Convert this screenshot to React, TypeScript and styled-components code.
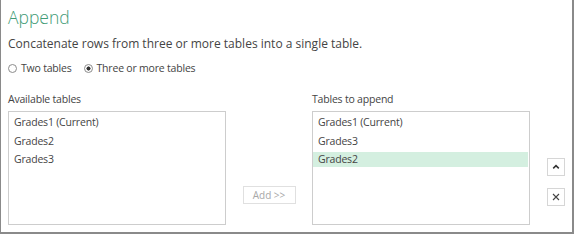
import styled, { createGlobalStyle } from "styled-components";

const GlobalStyle = createGlobalStyle`
  html, body {
    margin: 0;
    padding: 0;
    background: #ffffff;
  }
  body {
    font-family: "Segoe UI", "Open Sans", "Noto Sans", sans-serif;
    color: #444444;
  }
`;

interface ListItem {
  label: string;
  selected?: boolean;
}

const available: ListItem[] = [
  { label: "Grades1 (Current)" },
  { label: "Grades2" },
  { label: "Grades3" },
];

const toAppend: ListItem[] = [
  { label: "Grades1 (Current)" },
  { label: "Grades3" },
  { label: "Grades2", selected: true },
];

export default function App() {
  return (
    <>
      <GlobalStyle />
      <Dialog>
        <Title>Append</Title>
        <Description>Concatenate rows from three or more tables into a single table.</Description>
        <RadioRow>
          <RadioOption>
            <RadioCircle />
            Two tables
          </RadioOption>
          <RadioOption>
            <RadioCircle $checked />
            Three or more tables
          </RadioOption>
        </RadioRow>
        <Body>
          <Column>
            <Label>Available tables</Label>
            <ListBox>
              {available.map((item) => (
                <Row key={item.label} $selected={item.selected}>{item.label}</Row>
              ))}
            </ListBox>
          </Column>
          <Middle>
            <AddButton disabled>Add &gt;&gt;</AddButton>
          </Middle>
          <Column>
            <Label>Tables to append</Label>
            <ListBox>
              {toAppend.map((item) => (
                <Row key={item.label} $selected={item.selected}>{item.label}</Row>
              ))}
            </ListBox>
          </Column>
          <SideButtons>
            <IconButton title="Move up">
              <svg width="10" height="10" viewBox="0 0 10 10">
                <path d="M2.2 6.4 L5 3.6 L7.8 6.4" fill="none" stroke="#333" strokeWidth="1.5" />
              </svg>
            </IconButton>
            <IconButton title="Remove">
              <svg width="10" height="10" viewBox="0 0 10 10">
                <path d="M2 2 L8 8 M8 2 L2 8" fill="none" stroke="#444" strokeWidth="1.1" />
              </svg>
            </IconButton>
          </SideButtons>
        </Body>
      </Dialog>
    </>
  );
}

const Dialog = styled.div`
  box-sizing: border-box;
  width: 574px;
  height: 234px;
  padding: 5px 0 0 7px;
  border-left: 1px solid #8a8a8a;
  border-right: 2px solid #8a8a8a;
  border-bottom: 2px solid #8a8a8a;
  overflow: hidden;
`;

const Title = styled.h1`
  margin: 0;
  font-size: 17.5px;
  font-weight: 300;
  line-height: 25px;
  color: #3f9b76;
`;

const Description = styled.p`
  margin: 6px 0 0;
  font-size: 12px;
  line-height: 16px;
  color: #444444;
`;

const RadioRow = styled.div`
  display: flex;
  gap: 12px;
  margin-top: 9px;
  font-size: 10.5px;
  letter-spacing: -0.2px;
  line-height: 14px;
`;

const RadioOption = styled.label`
  display: flex;
  align-items: center;
  gap: 4px;
  color: #444444;
`;

const RadioCircle = styled.span<{ $checked?: boolean }>`
  box-sizing: border-box;
  width: 9px;
  height: 9px;
  border-radius: 50%;
  border: 1px solid #8c8c8c;
  background: ${(p) => (p.$checked ? "radial-gradient(circle, #333 0 1.8px, #fff 2.3px)" : "#fff")};
`;

const Body = styled.div`
  display: flex;
  margin-top: 17px;
`;

const Column = styled.div`
  display: flex;
  flex-direction: column;
  width: 218px;
`;

const Label = styled.div`
  font-size: 10.5px;
  letter-spacing: -0.2px;
  line-height: 14px;
  margin-bottom: 5px;
  color: #444444;
`;

const ListBox = styled.div`
  box-sizing: border-box;
  height: 114px;
  border: 1px solid #cdcdcd;
  padding: 3px 1px 0 0;
`;

const Row = styled.div<{ $selected?: boolean }>`
  height: 15px;
  line-height: 15px;
  margin-bottom: 3.5px;
  padding-left: 5px;
  font-size: 10.5px;
  letter-spacing: -0.2px;
  color: #444444;
  background: ${(p) => (p.$selected ? "#d4efe0" : "transparent")};
`;

const Middle = styled.div`
  width: 86px;
  display: flex;
  justify-content: center;
  padding-top: 94px;
`;

const AddButton = styled.button`
  box-sizing: border-box;
  width: 53px;
  height: 18px;
  padding: 0;
  border: 1px solid #e0e0e0;
  background: #ffffff;
  color: #a8a8a8;
  font-family: inherit;
  font-size: 10px;
`;

const SideButtons = styled.div`
  display: flex;
  flex-direction: column;
  gap: 12px;
  margin-left: 17px;
  padding-top: 66px;
`;

const IconButton = styled.button`
  box-sizing: border-box;
  width: 18px;
  height: 18px;
  padding: 0;
  display: flex;
  align-items: center;
  justify-content: center;
  border: 1px solid #d6d6d6;
  background: #ffffff;
`;
